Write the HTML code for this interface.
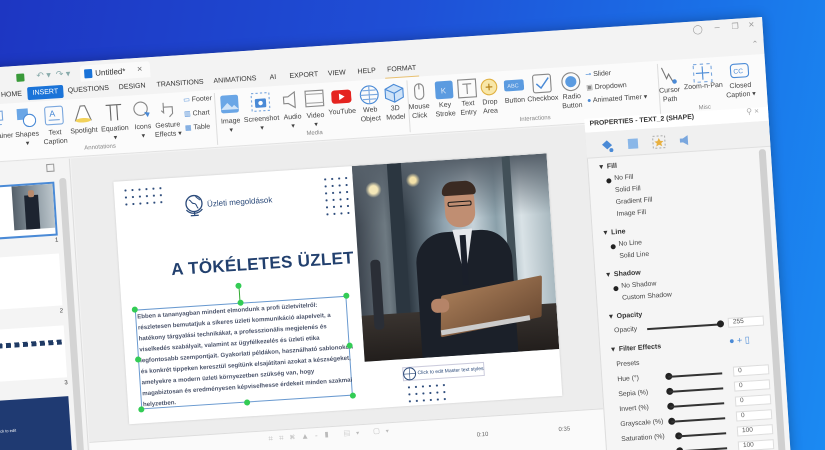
<!DOCTYPE html>
<html style="width:825px;height:450px;overflow:hidden"><head><meta charset="utf-8"><style>
*{box-sizing:border-box;margin:0;padding:0}
html,body{width:825px;height:450px;overflow:hidden}
body{position:relative;background:linear-gradient(100deg,#1d36c2 0%,#1f4fd6 45%,#1a72e8 80%,#1b8af2 100%);font-family:"Liberation Sans",sans-serif;color:#333}
.a{position:absolute}
#win{position:absolute;left:-58px;top:17px;width:820px;height:440px;background:#f3f3f3;transform-origin:820px 0;transform:rotate(-3.75deg);overflow:hidden;box-shadow:0 0 12px rgba(0,0,0,.3)}
.tab{position:absolute;top:25px;font-size:7px;color:#333;transform:translateX(-50%);white-space:nowrap}
.lbl{position:absolute;font-size:7px;color:#444;text-align:center;width:44px;line-height:9px;white-space:nowrap}
.ic{position:absolute;top:42px;width:20px;height:20px}
.gl{position:absolute;top:84px;font-size:6px;color:#888;transform:translateX(-50%)}
.sep{position:absolute;top:40px;width:1px;height:52px;background:#ddd}
.pr{position:absolute;font-size:6.8px;color:#444;white-space:nowrap}
.ph{position:absolute;font-size:7px;font-weight:bold;color:#333;white-space:nowrap}
.rad{position:absolute;width:5px;height:5px;border-radius:50%;background:#222}
.sl{position:absolute;height:1.5px;background:#333}
.kn{position:absolute;width:7px;height:7px;border-radius:50%;background:#222}
.vb{position:absolute;width:36px;height:10px;border:1px solid #ddd;background:#fff;font-size:6.5px;color:#555;padding-left:4px;line-height:8px}
.dots{position:absolute;background-image:radial-gradient(circle,#2b4a7a 0.9px,transparent 1.2px);background-size:7px 7px}
</style></head><body>
<div id="win">
  <div class="a" style="left:0;top:0;width:820px;height:22px;background:#f3f3f3"></div>
  <div class="a" style="left:72px;top:8px;width:8px;height:8px;background:#3a9a3a;border-radius:1px"></div>
  <div class="a" style="left:92px;top:6px;font-size:9px;color:#8aa">↶ ▾ &nbsp;↷ ▾</div>
  <div class="a" style="left:136px;top:4px;width:70px;height:16px;background:#fafafa;border-radius:3px 3px 0 0"></div>
  <div class="a" style="left:140px;top:8px;width:8px;height:9px;background:#1a73d8;border-radius:1px"></div>
  <div class="a" style="left:151px;top:8px;font-size:8px;color:#333">Untitled*</div>
  <div class="a" style="left:193px;top:6px;font-size:9px;color:#666">×</div>
  <div class="a" style="left:750px;top:3px;font-size:9px;color:#999">&#9711;</div>
  <div class="a" style="left:772px;top:2px;font-size:9px;color:#999">–</div>
  <div class="a" style="left:789px;top:3px;font-size:8px;color:#999">❐</div>
  <div class="a" style="left:806px;top:2px;font-size:10px;color:#999">×</div>
  <div class="a" style="left:808px;top:22px;font-size:8px;color:#999">⌃</div>
  <div class="tab" style="left:66px">HOME</div>
  <div class="a" style="left:82px;top:22px;width:36px;height:13px;background:#1a73d8;border-radius:2px"></div>
  <div class="tab" style="left:100px;color:#fff">INSERT</div>
  <div class="tab" style="left:143px">QUESTIONS</div>
  <div class="tab" style="left:187px">DESIGN</div>
  <div class="tab" style="left:235px">TRANSITIONS</div>
  <div class="tab" style="left:290px">ANIMATIONS</div>
  <div class="tab" style="left:328px">AI</div>
  <div class="tab" style="left:359px">EXPORT</div>
  <div class="tab" style="left:392px">VIEW</div>
  <div class="tab" style="left:422px">HELP</div>
  <div class="tab" style="left:457px">FORMAT</div>
  <div class="a" style="left:440px;top:36px;width:34px;height:1.5px;background:#e8c070"></div>
  <div class="a" style="left:0;top:37px;width:820px;height:58px;background:#fbfbfb;border-bottom:1px solid #e2e2e2"></div>
  <svg class="ic" style="left:40px" viewBox="0 0 18 18"><rect x="4" y="2" width="10" height="8" fill="none" stroke="#7aa7de"/><path d="M9 10v7M5 14h8" stroke="#7aa7de"/></svg>
  <div class="lbl" style="left:28px;top:65px">Container</div>
  <svg class="ic" style="left:69px" viewBox="0 0 18 18"><rect x="1" y="1" width="10" height="10" fill="#6aa6e6"/><circle cx="12" cy="12" r="5.5" fill="#fff" stroke="#4a8ad6"/></svg>
  <div class="lbl" style="left:57px;top:65px">Shapes<br>▾</div>
  <svg class="ic" style="left:97px" viewBox="0 0 18 18"><rect x="1" y="1" width="16" height="16" rx="2" fill="none" stroke="#7aa7de"/><text x="5" y="10" font-size="8" fill="#4a8ad6" font-family="Liberation Sans">A</text><path d="M4 13h10" stroke="#7aa7de"/></svg>
  <div class="lbl" style="left:85px;top:65px">Text<br>Caption</div>
  <svg class="ic" style="left:126px" viewBox="0 0 18 18"><path d="M7 2h4l5 13H2z" fill="#fff" stroke="#777"/><ellipse cx="9" cy="15" rx="7" ry="2" fill="#f2d25a"/></svg>
  <div class="lbl" style="left:114px;top:65px">Spotlight</div>
  <svg class="ic" style="left:157px" viewBox="0 0 18 18"><path d="M2 3h14M6 3v14M12 3v14" stroke="#666" fill="none"/></svg>
  <div class="lbl" style="left:145px;top:65px">Equation<br>▾</div>
  <svg class="ic" style="left:185px" viewBox="0 0 18 18"><circle cx="8" cy="8" r="6" fill="none" stroke="#888"/><path d="M11 11l5 1-2 4z" fill="#4a8ad6"/></svg>
  <div class="lbl" style="left:173px;top:65px">Icons<br>▾</div>
  <svg class="ic" style="left:210px" viewBox="0 0 18 18"><path d="M6 4v9l-2-2M6 8h8v6l-3 3" fill="none" stroke="#888"/></svg>
  <div class="lbl" style="left:198px;top:65px">Gesture<br>Effects ▾</div>
  <div class="a" style="left:237px;top:41px;font-size:7px;color:#444"><span style="color:#4a8ad6">▭</span> Footer</div>
  <div class="a" style="left:237px;top:55px;font-size:7px;color:#444"><span style="color:#4a8ad6">▥</span> Chart</div>
  <div class="a" style="left:237px;top:69px;font-size:7px;color:#444"><span style="color:#4a8ad6">▦</span> Table</div>
  <div class="gl" style="left:151px">Annotations</div>
  <div class="sep" style="left:268px"></div>
  <svg class="ic" style="left:273px" viewBox="0 0 18 18"><rect x="1" y="1" width="16" height="16" rx="2" fill="#6aa6e6"/><path d="M1 14l6-6 4 4 2-2 4 4" fill="#cfe3f8"/></svg>
  <div class="lbl" style="left:261px;top:65px">Image<br>▾</div>
  <svg class="ic" style="left:304px" viewBox="0 0 18 18"><rect x="1" y="1" width="16" height="16" fill="none" stroke="#7aa7de" stroke-dasharray="2 2"/><rect x="4" y="6" width="10" height="8" rx="1" fill="#4a8ad6"/><circle cx="9" cy="10" r="2" fill="#fff"/></svg>
  <div class="lbl" style="left:292px;top:65px">Screenshot<br>▾</div>
  <svg class="ic" style="left:335px" viewBox="0 0 18 18"><path d="M2 6h4l6-4v14l-6-4H2z" fill="none" stroke="#888"/></svg>
  <div class="lbl" style="left:323px;top:65px">Audio<br>▾</div>
  <svg class="ic" style="left:358px" viewBox="0 0 18 18"><rect x="1" y="2" width="16" height="14" fill="none" stroke="#888"/><path d="M1 5h16M1 13h16" stroke="#aaa"/></svg>
  <div class="lbl" style="left:346px;top:65px">Video<br>▾</div>
  <svg class="ic" style="left:385px" viewBox="0 0 18 18"><rect x="0" y="3" width="18" height="12" rx="3" fill="#e52420"/><path d="M7 6v6l5-3z" fill="#fff"/></svg>
  <div class="lbl" style="left:373px;top:63px">YouTube</div>
  <svg class="ic" style="left:413px" viewBox="0 0 18 18"><circle cx="9" cy="9" r="8" fill="none" stroke="#4a8ad6"/><path d="M1 9h16M9 1v16M3 5h12M3 13h12" stroke="#7aa7de" fill="none"/></svg>
  <div class="lbl" style="left:401px;top:63px">Web<br>Object</div>
  <svg class="ic" style="left:438px" viewBox="0 0 18 18"><path d="M9 1l8 4v8l-8 4-8-4V5z" fill="#cfe3f8" stroke="#4a8ad6"/><path d="M1 5l8 4 8-4M9 9v8" stroke="#4a8ad6" fill="none"/></svg>
  <div class="lbl" style="left:426px;top:63px">3D<br>Model</div>
  <div class="gl" style="left:366px">Media</div>
  <div class="sep" style="left:461px"></div>
  <svg class="ic" style="left:463px" viewBox="0 0 18 18"><rect x="5" y="2" width="8" height="14" rx="4" fill="none" stroke="#888"/><path d="M9 2v5" stroke="#888"/></svg>
  <div class="lbl" style="left:450px;top:63px">Mouse<br>Click</div>
  <svg class="ic" style="left:488px" viewBox="0 0 18 18"><rect x="1" y="1" width="16" height="16" rx="2" fill="#5b9be0"/><text x="6" y="12" font-size="7" fill="#dfeaf8" font-family="Liberation Sans">K</text></svg>
  <div class="lbl" style="left:476px;top:63px">Key<br>Stroke</div>
  <svg class="ic" style="left:511px" viewBox="0 0 18 18"><rect x="1" y="1" width="16" height="16" fill="none" stroke="#888"/><path d="M5 5h8M9 5v9" stroke="#888"/></svg>
  <div class="lbl" style="left:499px;top:63px">Text<br>Entry</div>
  <svg class="ic" style="left:533px" viewBox="0 0 18 18"><circle cx="9" cy="9" r="7" fill="#f8e7a8" stroke="#e0b040"/><path d="M9 6v6M6 9h6" stroke="#b07a10"/></svg>
  <div class="lbl" style="left:521px;top:63px">Drop<br>Area</div>
  <svg class="ic" style="left:558px" viewBox="0 0 18 18"><rect x="0" y="4" width="18" height="10" rx="2" fill="#5b9be0"/><text x="3" y="11" font-size="5" fill="#dfeaf8" font-family="Liberation Sans">ABC</text></svg>
  <div class="lbl" style="left:546px;top:63px">Button</div>
  <svg class="ic" style="left:586px" viewBox="0 0 18 18"><rect x="1" y="1" width="16" height="16" rx="2" fill="none" stroke="#888"/><path d="M4 9l4 4 7-9" stroke="#4a8ad6" fill="none" stroke-width="1.3"/></svg>
  <div class="lbl" style="left:574px;top:63px">Checkbox</div>
  <svg class="ic" style="left:615px" viewBox="0 0 18 18"><circle cx="9" cy="9" r="8" fill="none" stroke="#888"/><circle cx="9" cy="9" r="5" fill="#5b9be0"/></svg>
  <div class="lbl" style="left:603px;top:63px">Radio<br>Button</div>
  <div class="a" style="left:640px;top:42px;font-size:7px;color:#444"><span style="color:#4a8ad6">⊸</span> Slider</div>
  <div class="a" style="left:640px;top:55px;font-size:7px;color:#444"><span style="color:#888">▣</span> Dropdown</div>
  <div class="a" style="left:640px;top:68px;font-size:7px;color:#444"><span style="color:#4a8ad6">●</span> Animated Timer ▾</div>
  <div class="gl" style="left:587px">Interactions</div>
  <div class="sep" style="left:712px"></div>
  <svg class="ic" style="left:713px" viewBox="0 0 18 18"><path d="M3 2l4 10 2-4 4 8" fill="none" stroke="#777"/><circle cx="14" cy="15" r="2" fill="#4a8ad6"/></svg>
  <div class="lbl" style="left:701px;top:63px">Cursor<br>Path</div>
  <svg class="ic" style="left:747px" viewBox="0 0 18 18"><rect x="1" y="1" width="16" height="16" fill="none" stroke="#7aa7de" stroke-dasharray="3 3"/><path d="M9 3v12M3 9h12" stroke="#4a8ad6"/></svg>
  <div class="lbl" style="left:735px;top:61px">Zoom-n-Pan</div>
  <svg class="ic" style="left:784px" viewBox="0 0 18 18"><rect x="1" y="3" width="16" height="12" rx="3" fill="none" stroke="#4a8ad6"/><text x="3.5" y="11.5" font-size="6" fill="#4a8ad6" font-family="Liberation Sans">CC</text></svg>
  <div class="lbl" style="left:772px;top:63px">Closed<br>Caption ▾</div>
  <div class="gl" style="left:757px">Misc</div>

  <div class="a" style="left:0;top:96px;width:120px;height:400px;background:#f4f4f4;border-right:1px solid #ddd"></div>
  <div class="a" style="left:96px;top:100px;width:8px;height:8px;border:1px solid #999"></div>
  <div class="a" style="left:108px;top:115px;width:7px;height:300px;background:#d4d4d4;border-radius:3px"></div>
  <div class="a" style="left:8px;top:118px;width:95px;height:54px;background:#fff;border:2px solid #4a8ad6;overflow:hidden">
    <div class="a" style="left:50px;top:0;width:45px;height:44px;background:linear-gradient(90deg,#55606a,#9aa6ae 60%,#c6cfd4)"></div>
    <div class="a" style="left:62px;top:10px;width:14px;height:34px;background:#1d2430"></div>
    <div class="a" style="left:66px;top:5px;width:6px;height:7px;background:#b98a6c;border-radius:2px"></div>
  </div>
  <div class="a" style="left:100px;top:174px;font-size:6px">1</div>
  <div class="a" style="left:8px;top:190px;width:95px;height:52px;background:#fff">
    <div class="a" style="left:4px;top:6px;width:5px;height:40px;background:repeating-linear-gradient(#1f3a64 0 4px,transparent 4px 7px)"></div>
    <div class="a" style="left:10px;top:6px;width:10px;height:40px;background:repeating-linear-gradient(#889 0 1px,transparent 1px 7px)"></div>
  </div>
  <div class="a" style="left:100px;top:245px;font-size:6px">2</div>
  <div class="a" style="left:8px;top:262px;width:95px;height:52px;background:#fff">
    <div class="a" style="left:2px;top:14px;width:90px;height:5px;background:repeating-linear-gradient(90deg,#1f3a64 0 5px,transparent 5px 8.5px)"></div>
  </div>
  <div class="a" style="left:100px;top:317px;font-size:6px">3</div>
  <div class="a" style="left:8px;top:333px;width:95px;height:60px;background:#1f3a72"><div class="a" style="left:20px;top:28px;font-size:4px;color:#fff">Click to edit</div></div>

  <div class="a" style="left:121px;top:96px;width:515px;height:284px;background:#ededed"></div>
  <div class="a" style="left:162px;top:122px;width:434px;height:243px;background:#fff;overflow:hidden;box-shadow:0 0 2px rgba(0,0,0,.15)">
    <div class="dots" style="left:8px;top:6px;width:42px;height:22px"></div>
    <div class="dots" style="left:208px;top:8px;width:28px;height:44px"></div>
    <svg class="a" style="left:68px;top:17px" width="22" height="24" viewBox="0 0 22 24"><circle cx="11" cy="10" r="8" fill="none" stroke="#2b4a7a" stroke-width="1.3"/><path d="M6 6c3 1 2 4 5 4s2 4 4 5M13 3c1 2 3 2 4 4" stroke="#2b4a7a" fill="none"/><path d="M3 16c4 5 12 5 16 0M11 18v4M7 22h8" stroke="#2b4a7a" fill="none" stroke-width="1.2"/></svg>
    <div class="a" style="left:92px;top:24px;font-size:8px;color:#2b4a7a">Üzleti megoldások</div>
    <div class="a" style="left:52px;top:82px;font-size:17px;font-weight:bold;color:#22406e;letter-spacing:.3px">A TÖKÉLETES ÜZLET</div>
    <div class="a" style="left:13px;top:129px;width:212px;height:100px;border:1px solid #6a9ad0"></div>
    <div class="a" style="left:15px;top:131px;font-size:6.1px;line-height:11px;color:#2a3550;white-space:nowrap;font-weight:bold;opacity:.85">
Ebben a tananyagban mindent elmondunk a profi üzletvitelről:<br>részletesen bemutatjuk a sikeres üzleti kommunikáció alapelveit, a<br>hatékony tárgyalási technikákat, a professzionális megjelenés és<br>viselkedés szabályait, valamint az ügyfélkezelés és üzleti etika<br>legfontosabb szempontjait. Gyakorlati példákon, használható sablonokon<br>és konkrét tippeken keresztül segítünk elsajátítani azokat a készségeket,<br>amelyekre a modern üzleti környezetben szükség van, hogy<br>magabiztosan és eredményesen képviselhesse érdekeit minden szakmai<br>helyzetben.</div>
    <div class="a" style="left:118px;top:112px;width:1px;height:17px;background:#3a3"></div>
    <div class="a" style="left:115px;top:109px;width:6px;height:6px;border-radius:50%;background:#3c5"></div>
    <div class="a" style="left:10px;top:126px;width:6px;height:6px;border-radius:50%;background:#3c5"></div>
    <div class="a" style="left:116px;top:126px;width:6px;height:6px;border-radius:50%;background:#3c5"></div>
    <div class="a" style="left:222px;top:126px;width:6px;height:6px;border-radius:50%;background:#3c5"></div>
    <div class="a" style="left:10px;top:176px;width:6px;height:6px;border-radius:50%;background:#3c5"></div>
    <div class="a" style="left:222px;top:176px;width:6px;height:6px;border-radius:50%;background:#3c5"></div>
    <div class="a" style="left:10px;top:226px;width:6px;height:6px;border-radius:50%;background:#3c5"></div>
    <div class="a" style="left:116px;top:226px;width:6px;height:6px;border-radius:50%;background:#3c5"></div>
    <div class="a" style="left:222px;top:226px;width:6px;height:6px;border-radius:50%;background:#3c5"></div>
    <div class="a" style="left:239px;top:0;width:195px;height:196px;overflow:hidden;background:linear-gradient(90deg,#3e4650 0%,#6e7a82 15%,#2f3a44 25%,#8fa2ae 45%,#c7d3da 60%,#8aa0aa 72%,#d9e2e6 85%,#a9b9c0 100%)">
      <div class="a" style="left:0;top:0;width:195px;height:60px;background:radial-gradient(circle at 20px 25px,#f4e7b8 0 4px,transparent 8px),radial-gradient(circle at 60px 18px,#f3e1a8 0 3px,transparent 7px),linear-gradient(#56606a,transparent)"></div>
      <div class="a" style="left:35px;top:0;width:14px;height:196px;background:#2b3640"></div>
      <div class="a" style="left:150px;top:0;width:8px;height:196px;background:#425058"></div>
      <div class="a" style="left:0;top:150px;width:195px;height:46px;background:linear-gradient(#3a3430,#221e1c)"></div>
      <div class="a" style="left:12px;top:95px;width:10px;height:70px;background:#2a2e36;border-radius:4px"></div>
      <div class="a" style="left:58px;top:72px;width:96px;height:124px;background:#1b2029;border-radius:30px 30px 0 0"></div>
      <div class="a" style="left:96px;top:70px;width:20px;height:40px;background:#e6e8ec;clip-path:polygon(0 0,100% 0,60% 100%,40% 100%)"></div>
      <div class="a" style="left:103px;top:76px;width:6px;height:50px;background:#1a1f2a"></div>
      <div class="a" style="left:90px;top:28px;width:30px;height:40px;background:#c08e72;border-radius:12px 12px 14px 14px"></div>
      <div class="a" style="left:88px;top:22px;width:34px;height:14px;background:#3a2a22;border-radius:14px 14px 4px 4px"></div>
      <div class="a" style="left:93px;top:42px;width:24px;height:5px;border:1.5px solid #151515;border-radius:2px"></div>
      <div class="a" style="left:80px;top:128px;width:100px;height:42px;background:linear-gradient(160deg,#a57a56,#6d4c34);transform:skewX(-12deg) rotate(-8deg);border-radius:2px"></div>
      <div class="a" style="left:78px;top:165px;width:90px;height:5px;background:#ccc;transform:rotate(-6deg)"></div>
      <div class="a" style="left:70px;top:138px;width:18px;height:14px;background:#b58468;border-radius:6px"></div>
    </div>
    <div class="a" style="left:276px;top:204px;width:82px;height:14px;border:1px solid #ccd;font-size:5px;color:#2b4a7a;padding:3px 0 0 14px;white-space:nowrap">Click to edit Master text styles</div>
    <svg class="a" style="left:276px;top:204px" width="14" height="14"><circle cx="7" cy="7" r="6" fill="none" stroke="#2b4a7a"/><path d="M1 7h12M7 1v12" stroke="#2b4a7a" stroke-width=".6"/></svg>
    <div class="dots" style="left:278px;top:221px;width:42px;height:20px"></div>
  </div>
  <div class="a" style="left:121px;top:380px;width:515px;height:100px;background:#fafafa;border-top:1px solid #ddd"></div>
  <div class="a" style="left:300px;top:384px;font-size:8px;color:#bbb;letter-spacing:6px">⌗⌗⌘▲-▮ ▤▾ ▢▾</div>
  <div class="a" style="left:508px;top:396px;font-size:6px;color:#666">0:10</div>
  <div class="a" style="left:590px;top:396px;font-size:6px;color:#666">0:35</div>

  <div class="a" style="left:636px;top:96px;width:184px;height:400px;background:#f5f5f5;border-left:1px solid #ddd"></div>
  <div class="a" style="left:636px;top:90px;width:184px;height:14px;background:#fff"></div>
  <div class="a" style="left:641px;top:92px;font-size:6.8px;font-weight:bold;color:#333">PROPERTIES - TEXT_2 (SHAPE)</div>
  <div class="a" style="left:798px;top:89px;font-size:8px;color:#aaa">⚲ ×</div>
  <div class="a" style="left:636px;top:104px;width:184px;height:26px;background:#f0f0f0;border-bottom:1px solid #e0e0e0"></div>
  <svg class="a" style="left:650px;top:111px" width="14" height="14"><path d="M2 6l5-4 5 5-5 4z" fill="#4a8ad6"/><circle cx="11" cy="12" r="2" fill="#4a8ad6"/></svg>
  <svg class="a" style="left:676px;top:111px" width="14" height="14"><rect x="2" y="2" width="10" height="10" fill="#8ab7e8"/></svg>
  <svg class="a" style="left:702px;top:111px" width="14" height="14"><rect x="1" y="1" width="12" height="12" fill="none" stroke="#aaa" stroke-dasharray="2 2"/><path d="M7 3l1.5 3 3 .3-2.3 2 .8 3L7 9.7 4 11.3l.8-3-2.3-2 3-.3z" fill="#e8b040"/></svg>
  <svg class="a" style="left:728px;top:111px" width="14" height="14"><path d="M2 5h3l5-3v10l-5-3H2z" fill="#7aa7de"/></svg>
  <div class="a" style="left:808px;top:132px;width:7px;height:350px;background:#d0d0d0;border-radius:3px"></div>
  <div class="ph" style="left:648px;top:135px">▾ &nbsp;Fill</div>
  <div class="rad" style="left:654px;top:151px"></div><div class="pr" style="left:662px;top:148px">No Fill</div>
  <div class="pr" style="left:662px;top:160px">Solid Fill</div>
  <div class="pr" style="left:662px;top:172px">Gradient Fill</div>
  <div class="pr" style="left:662px;top:184px">Image Fill</div>
  <div class="ph" style="left:648px;top:201px">▾ &nbsp;Line</div>
  <div class="rad" style="left:654px;top:217px"></div><div class="pr" style="left:662px;top:214px">No Line</div>
  <div class="pr" style="left:662px;top:226px">Solid Line</div>
  <div class="ph" style="left:648px;top:243px">▾ &nbsp;Shadow</div>
  <div class="rad" style="left:654px;top:259px"></div><div class="pr" style="left:662px;top:256px">No Shadow</div>
  <div class="pr" style="left:662px;top:268px">Custom Shadow</div>
  <div class="ph" style="left:648px;top:285px">▾ &nbsp;Opacity</div>
  <div class="pr" style="left:652px;top:300px">Opacity</div>
  <div class="sl" style="left:685px;top:303px;width:74px"></div><div class="kn" style="left:755px;top:300px"></div>
  <div class="vb" style="left:766px;top:298px">255</div>
  <div class="ph" style="left:648px;top:318px">▾ &nbsp;Filter Effects</div>
  <div class="a" style="left:766px;top:316px;font-size:9px;color:#4a8ad6">● + ▯</div>
  <div class="pr" style="left:652px;top:334px">Presets</div>
  <div class="pr" style="left:652px;top:349px">Hue (°)</div>
  <div class="kn" style="left:700px;top:349px"></div><div class="sl" style="left:703px;top:352px;width:54px"></div><div class="vb" style="left:768px;top:347px">0</div>
  <div class="pr" style="left:652px;top:364px">Sepia (%)</div>
  <div class="kn" style="left:700px;top:364px"></div><div class="sl" style="left:703px;top:367px;width:54px"></div><div class="vb" style="left:768px;top:362px">0</div>
  <div class="pr" style="left:652px;top:379px">Invert (%)</div>
  <div class="kn" style="left:700px;top:379px"></div><div class="sl" style="left:703px;top:382px;width:54px"></div><div class="vb" style="left:768px;top:377px">0</div>
  <div class="pr" style="left:652px;top:394px">Grayscale (%)</div>
  <div class="kn" style="left:700px;top:394px"></div><div class="sl" style="left:703px;top:397px;width:54px"></div><div class="vb" style="left:768px;top:392px">0</div>
  <div class="pr" style="left:652px;top:409px">Saturation (%)</div>
  <div class="kn" style="left:706px;top:409px"></div><div class="sl" style="left:709px;top:412px;width:48px"></div><div class="vb" style="left:768px;top:407px">100</div>
  <div class="kn" style="left:706px;top:424px"></div><div class="sl" style="left:709px;top:427px;width:48px"></div><div class="vb" style="left:768px;top:422px">100</div>
</div>
</body></html>
